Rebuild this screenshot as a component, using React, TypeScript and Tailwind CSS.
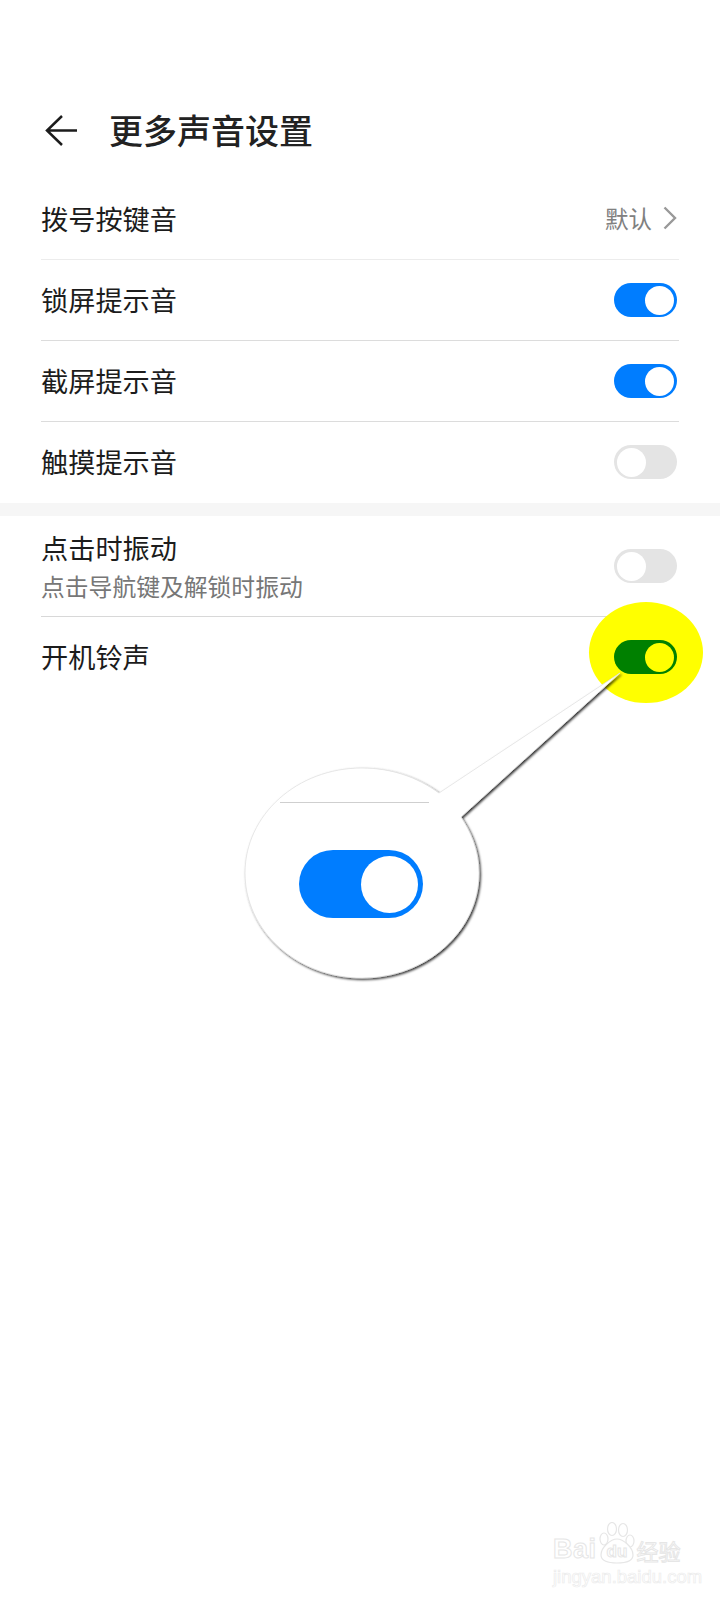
const font = "[font-family:'Noto_Sans_CJK_SC','Noto_Sans',sans-serif]";

function Toggle({ on }: { on: boolean }) {
  if (on) {
    return (
      <div className="flex h-[34px] w-[63px] items-center justify-end rounded-full bg-[#007dff] pr-[3px]">
        <div className="h-[29px] w-[29px] rounded-full bg-white" />
      </div>
    );
  }
  return (
    <div className="flex h-[34px] w-[63px] items-center justify-start rounded-full bg-[#e4e4e4] pl-[3px]">
      <div className="h-[29px] w-[29px] rounded-full bg-white" />
    </div>
  );
}

function Row({ label, right, line }: { label: string; right: React.ReactNode; line: string }) {
  return (
    <div className={`flex h-[81px] items-center justify-between border-b pr-[2px] ${line}`}>
      <span className="text-[27.2px] leading-none text-[#1c1c1c]">{label}</span>
      {right}
    </div>
  );
}

function Callout() {
  return (
    <div className="absolute left-[240px] top-[660px] h-[330px] w-[390px]">
      <svg width="390" height="330" viewBox="240 660 390 330" className="absolute inset-0">
        <defs>
          <filter id="shade" x="-10%" y="-10%" width="125%" height="125%">
            <feDropShadow dx="1.5" dy="1.5" stdDeviation="1.2" floodColor="#000" floodOpacity="0.8" />
          </filter>
        </defs>
        <path
          d="M439 793 L620 673 L461 817 C470 831 479 849 479 873 C479 931 427 978 362 978 C297 978 245 931 245 873 C245 815 297 768 362 768 C391 768 417 777 439 793 Z"
          fill="#fff"
          stroke="#e2e2e2"
          strokeWidth="0.8"
          filter="url(#shade)"
        />
      </svg>
      <div className="absolute left-[40px] top-[142px] h-px w-[149px] bg-[#cfcfcf]" />
      <div className="absolute left-[59px] top-[190px] flex h-[68px] w-[124px] items-center justify-end rounded-full bg-[#007dff] pr-[5px]">
        <div className="h-[57px] w-[57px] rounded-full bg-white" />
      </div>
    </div>
  );
}

function Watermark() {
  return (
    <div className="absolute left-[553px] top-[1522px] w-[130px] text-white [-webkit-text-stroke:1px_#e6e6e6]">
      <div className="flex h-[42px] items-end">
        <span className="text-[27px] font-bold leading-[30px] tracking-[0.5px] [font-family:'Liberation_Sans',sans-serif]">Bai</span>
        <div className="relative ml-[2px] h-[42px] w-[36px]">
          <svg width="36" height="42" viewBox="0 0 36 42" className="absolute left-0 top-0" fill="#fff" stroke="#e6e6e6" strokeWidth="1.2">
            <ellipse cx="5" cy="17" rx="4" ry="6" />
            <ellipse cx="13" cy="7" rx="4.5" ry="6.5" />
            <ellipse cx="24" cy="8" rx="4.5" ry="6.5" />
            <ellipse cx="31" cy="19" rx="4" ry="6" />
            <path d="M18 17c6 0 16 8 16 16 0 6-7 8-16 8S2 39 2 33c0-8 10-16 16-16z" />
          </svg>
          <span className="absolute bottom-[4px] left-[8px] text-[17px] font-bold leading-none [font-family:'Liberation_Sans',sans-serif]">du</span>
        </div>
        <span className="ml-[2px] text-[22px] leading-[28px]">经验</span>
      </div>
      <div className="mt-[3px] text-[18.5px] leading-[20px] [-webkit-text-stroke:0.7px_#ececec] [font-family:'Liberation_Sans',sans-serif]">
        jingyan.baidu.com
      </div>
    </div>
  );
}

export default function App() {
  return (
    <div className={`relative h-[1600px] w-[720px] overflow-hidden bg-white ${font}`}>
      <div className="flex h-[179px] items-center gap-[32px] pl-[45px] pt-[82px]">
        <svg width="32" height="32" viewBox="0 0 32 32" fill="none" stroke="#1c1c1c" strokeWidth="2.5">
          <path d="M32 15.5H2M17 1 2 15.5 17 30" />
        </svg>
        <h1 className="mb-[2px] text-[34px] font-medium leading-none text-[#222]">更多声音设置</h1>
      </div>

      <div className="mx-[41px]">
        <Row
          label="拨号按键音"
          line="border-[#ececec]"
          right={
            <div className="flex items-center text-[#808080]">
              <span className="text-[23.5px] leading-none">默认</span>
              <svg width="14" height="24" viewBox="0 0 14 24" fill="none" stroke="#999" strokeWidth="2.4" className="mb-[2px] ml-[11px]">
                <path d="M1.5 1.5 12 12 1.5 22.5" />
              </svg>
            </div>
          }
        />
        <Row label="锁屏提示音" line="border-[#dcdcdc]" right={<Toggle on />} />
        <Row label="截屏提示音" line="border-[#dcdcdc]" right={<Toggle on />} />
        <div className="flex h-[81px] items-center justify-between pb-[1px] pr-[2px]">
          <span className="text-[27.2px] leading-none text-[#1c1c1c]">触摸提示音</span>
          <Toggle on={false} />
        </div>
      </div>

      <div className="h-[13px] bg-[#f6f6f6]" />

      <div className="mx-[41px]">
        <div className="flex h-[101px] items-center justify-between border-b border-[#d8d8d8] pr-[2px]">
          <div className="flex flex-col gap-[13px]">
            <span className="text-[27.2px] leading-[27px] text-[#1c1c1c]">点击时振动</span>
            <span className="text-[23.8px] leading-[24px] text-[#777]">点击导航键及解锁时振动</span>
          </div>
          <Toggle on={false} />
        </div>
        <div className="flex h-[81px] items-center justify-between pb-[1px] pr-[2px]">
          <span className="text-[27.2px] leading-none text-[#1c1c1c]">开机铃声</span>
          <div className="relative z-10 flex h-[34px] w-[63px] items-center justify-end rounded-full bg-[#008000] pr-[3px]">
            <div className="h-[29px] w-[29px] rounded-full bg-[#ffff00]" />
          </div>
        </div>
      </div>

      <div className="absolute left-[589px] top-[602px] h-[101px] w-[114px] rounded-[50%] bg-[#ffff00]" />
      <Callout />
      <Watermark />
    </div>
  );
}
